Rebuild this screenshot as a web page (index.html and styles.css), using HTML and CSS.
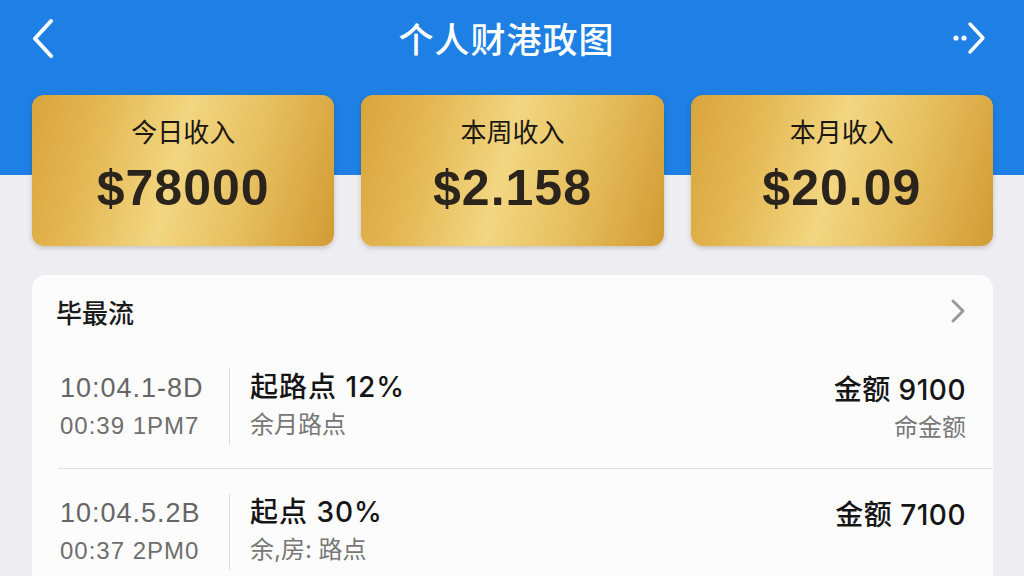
FILE: index.html
```html
<!DOCTYPE html>
<html lang="zh">
<head>
<meta charset="utf-8">
<title>个人财港政图</title>
<link rel="stylesheet" href="styles.css">
</head>
<body>
<div class="page">
  <header class="nav">
    <button class="nav-btn back" aria-label="返回">
      <svg width="30" height="40" viewBox="0 0 30 40"><path d="M25 3 L9 20.5 L25 38" fill="none" stroke="#fff" stroke-width="4" stroke-linecap="round" stroke-linejoin="round"/></svg>
    </button>
    <h1 class="title">个人财港政图</h1>
    <button class="nav-btn exit" aria-label="退出">
      <svg width="40" height="36" viewBox="0 0 40 36"><circle cx="5" cy="18" r="2.6" fill="#fff"/><circle cx="13" cy="18" r="2.6" fill="#fff"/><path d="M19 4 L32 18 L19 32" fill="none" stroke="#fff" stroke-width="3.4" stroke-linecap="round" stroke-linejoin="round"/></svg>
    </button>
  </header>

  <section class="cards">
    <div class="card">
      <div class="card-label">今日收入</div>
      <div class="card-amount">$78000</div>
    </div>
    <div class="card">
      <div class="card-label">本周收入</div>
      <div class="card-amount">$2.158</div>
    </div>
    <div class="card">
      <div class="card-label">本月收入</div>
      <div class="card-amount">$20.09</div>
    </div>
  </section>

  <section class="panel">
    <div class="panel-head">
      <span class="panel-title">毕最流</span>
      <svg class="panel-more" width="18" height="26" viewBox="0 0 18 26"><path d="M4 3 L14 13 L4 23" fill="none" stroke="#9a9a9a" stroke-width="3" stroke-linecap="round" stroke-linejoin="round"/></svg>
    </div>
    <div class="row">
      <div class="time">
        <div class="t1">10:04.1-8D</div>
        <div class="t2">00:39 1PM7</div>
      </div>
      <div class="mid">
        <div class="m1">起路点 12%</div>
        <div class="m2">余月路点</div>
      </div>
      <div class="amt">
        <div class="a1">金额 9100</div>
        <div class="a2">命金额</div>
      </div>
    </div>
    <div class="row">
      <div class="time">
        <div class="t1">10:04.5.2B</div>
        <div class="t2">00:37 2PM0</div>
      </div>
      <div class="mid">
        <div class="m1">起点 30%</div>
        <div class="m2">余,房: 路点</div>
      </div>
      <div class="amt">
        <div class="a1">金额 7100</div>
        <div class="a2">&nbsp;</div>
      </div>
    </div>
  </section>
</div>
</body>
</html>
```

FILE: styles.css
```css
* { box-sizing: border-box; }

html, body {
  margin: 0;
  padding: 0;
  height: 100%;
  overflow: hidden;
}

body {
  font-family: Inter, "Noto Sans CJK SC", sans-serif;
  background: linear-gradient(#1e7fe4 0, #1e7fe4 175px, #eeeef2 175px, #eeeef2 100%);
  color: #151515;
}

.page {
  width: 1024px;
  height: 576px;
}

.nav {
  height: 75px;
  display: grid;
  grid-template-columns: 1fr auto 1fr;
  align-items: center;
  padding: 0 33px 0 26px;
}

.nav-btn {
  background: none;
  border: 0;
  padding: 0;
  display: flex;
  align-items: center;
  cursor: pointer;
}

.back { justify-self: start; }
.exit { justify-self: end; }

.title {
  margin: 0 0 0 -4px;
  font-family: "Noto Sans CJK SC", sans-serif;
  font-size: 35px;
  font-weight: 500;
  letter-spacing: 1px;
  color: #fff;
  line-height: 1;
}

.cards {
  margin-top: 20px;
  padding: 0 31px 0 32px;
  display: flex;
  gap: 27px;
}

.card {
  flex: 1;
  height: 151px;
  border-radius: 12px;
  background: linear-gradient(105deg, #d9a43c 0%, #e4b853 22%, #f2d681 47%, #e8c262 68%, #d29b33 100%);
  box-shadow: 0 2px 5px rgba(80, 60, 20, 0.25);
  display: flex;
  flex-direction: column;
  align-items: center;
  padding-top: 18px;
}

.card-label {
  font-family: "Noto Sans CJK SC", sans-serif;
  font-size: 26px;
  line-height: 36px;
  color: #1b1712;
}

.card-amount {
  margin-top: 11px;
  font-family: "Liberation Sans", sans-serif;
  font-size: 50px;
  font-weight: 700;
  line-height: 56px;
  letter-spacing: 1px;
  color: #2a241c;
}

.panel {
  margin: 29px 31px 0 32px;
  background: #fcfcfc;
  border-radius: 14px 14px 0 0;
  height: 320px;
}

.panel-head {
  display: flex;
  align-items: center;
  justify-content: space-between;
  padding: 20px 26px 15px 24px;
  height: 69px;
}

.panel-title {
  font-family: "Noto Sans CJK SC", sans-serif;
  font-size: 26px;
  line-height: 34px;
  font-weight: 500;
  color: #1a1a1a;
}

.panel-more {
  margin-top: -2px;
}

.row {
  margin-left: 26px;
  padding: 25px 27px 23px 2px;
  display: flex;
  align-items: stretch;
  border-bottom: 1px solid #e2e2e4;
}

.time {
  width: 170px;
  border-right: 1px solid #dcdcdc;
  color: #666;
  font-family: "Liberation Sans", sans-serif;
}

.t1 {
  font-size: 27px;
  line-height: 38px;
  white-space: nowrap;
  letter-spacing: 1px;
}

.t2 {
  font-size: 24px;
  line-height: 37px;
  white-space: nowrap;
  letter-spacing: 1px;
  color: #6e6e6e;
}

.mid {
  padding-left: 20px;
}

.m1 {
  font-size: 28px;
  line-height: 37px;
  font-weight: 500;
  letter-spacing: 1px;
  color: #151515;
}

.m2, .a2 {
  font-size: 24px;
  line-height: 37px;
  color: #777;
}

.amt {
  margin-left: auto;
  text-align: right;
}

.a1 {
  font-size: 28px;
  line-height: 42px;
  font-weight: 500;
  letter-spacing: 0.5px;
  color: #151515;
}

.a2 {
  line-height: 34px;
}
```
